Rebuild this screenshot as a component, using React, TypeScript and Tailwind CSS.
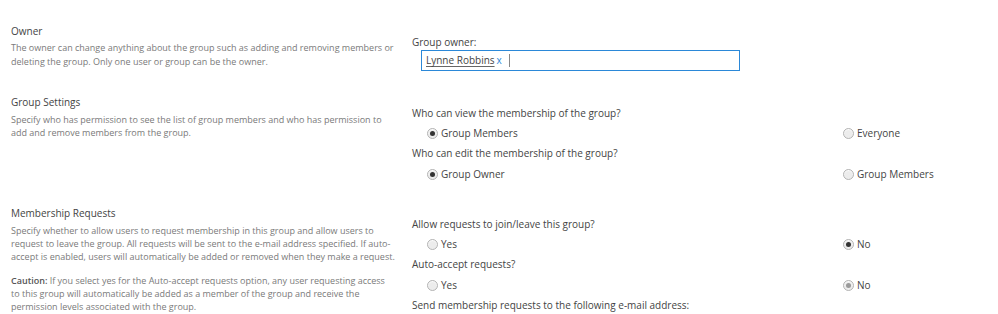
import React from "react";

function Radio({ checked, disabled }: { checked?: boolean; disabled?: boolean }) {
  return (
    <span className="inline-flex h-[11px] w-[11px] items-center justify-center rounded-full border border-[#b4b4b4] bg-[#ececec] shadow-[inset_0_1px_1px_rgba(255,255,255,0.9)]">
      {checked && (
        <span
          className={
            disabled
              ? "h-[5px] w-[5px] rounded-full bg-[#9a9a9a]"
              : "h-[5px] w-[5px] rounded-full bg-[#333]"
          }
        />
      )}
    </span>
  );
}

function Option({ label, checked, disabled }: { label: string; checked?: boolean; disabled?: boolean }) {
  return (
    <label className="flex items-center gap-[3px] h-[20px]">
      <Radio checked={checked} disabled={disabled} />
      <span>{label}</span>
    </label>
  );
}

function OptionRow(props: {
  left: string;
  right: string;
  leftChecked?: boolean;
  rightChecked?: boolean;
  rightDisabled?: boolean;
}) {
  return (
    <div className="grid grid-cols-[1fr_155px] pl-[15px]">
      <Option label={props.left} checked={props.leftChecked} />
      <Option label={props.right} checked={props.rightChecked} disabled={props.rightDisabled} />
    </div>
  );
}

export default function App() {
  return (
    <div
      className="w-[998px] h-[314px] overflow-hidden bg-white text-[#444]"
      style={{ fontFamily: '"Open Sans", "Noto Sans", sans-serif' }}
    >
      {/* Owner */}
      <div className="grid grid-cols-[412px_1fr] pt-[22px]">
        <div className="pl-[11px]">
          <h3 className="text-[10px] leading-[18px] text-[#444]">Owner</h3>
          <p className="mt-[1px] whitespace-nowrap text-[9px] leading-[13.5px] text-[#7a7a7a]">
            The owner can change anything about the group such as adding and removing members or
            <br />
            deleting the group. Only one user or group can be the owner.
          </p>
        </div>
        <div className="pt-[12px]">
          <div className="text-[10px] leading-[16px]">Group owner:</div>
          <div className="ml-[9px] flex h-[21px] w-[319px] items-center border border-[#2b88d8] px-[4px] text-[10px]">
            <span className="underline decoration-[#666] underline-offset-2">Lynne Robbins</span>
            <span className="ml-[2px] text-[#2b88d8]">x</span>
            <span className="ml-[7px] h-[13px] w-px bg-[#888]" />
          </div>
        </div>
      </div>

      {/* Group Settings */}
      <div className="grid grid-cols-[412px_1fr] pt-[22px]">
        <div className="pl-[11px]">
          <h3 className="text-[10px] leading-[18px] text-[#444]">Group Settings</h3>
          <p className="mt-[2px] whitespace-nowrap text-[9px] leading-[13px] text-[#7a7a7a]">
            Specify who has permission to see the list of group members and who has permission to
            <br />
            add and remove members from the group.
          </p>
        </div>
        <div className="pt-[10px] text-[10px]">
          <div className="leading-[20px]">Who can view the membership of the group?</div>
          <OptionRow left="Group Members" right="Everyone" leftChecked />
          <div className="leading-[21px]">Who can edit the membership of the group?</div>
          <OptionRow left="Group Owner" right="Group Members" leftChecked />
        </div>
      </div>

      {/* Membership Requests */}
      <div className="grid grid-cols-[412px_1fr] pt-[20px]">
        <div className="pl-[11px]">
          <h3 className="text-[10px] leading-[18px] text-[#444]">Membership Requests</h3>
          <p className="mt-[2px] whitespace-nowrap text-[9px] leading-[13px] text-[#7a7a7a]">
            Specify whether to allow users to request membership in this group and allow users to
            <br />
            request to leave the group. All requests will be sent to the e-mail address specified. If auto-
            <br />
            accept is enabled, users will automatically be added or removed when they make a request.
          </p>
          <p className="mt-[11px] whitespace-nowrap text-[9px] leading-[13px] text-[#7a7a7a]">
            <span className="font-semibold text-[#555]">Caution:</span> If you select yes for the
            Auto-accept requests option, any user requesting access
            <br />
            to this group will automatically be added as a member of the group and receive the
            <br />
            permission levels associated with the group.
          </p>
        </div>
        <div className="pt-[10px] text-[10px]">
          <div className="leading-[20px]">Allow requests to join/leave this group?</div>
          <OptionRow left="Yes" right="No" rightChecked />
          <div className="leading-[21px]">Auto-accept requests?</div>
          <OptionRow left="Yes" right="No" rightChecked rightDisabled />
          <div className="leading-[21px]">Send membership requests to the following e-mail address:</div>
        </div>
      </div>
    </div>
  );
}
